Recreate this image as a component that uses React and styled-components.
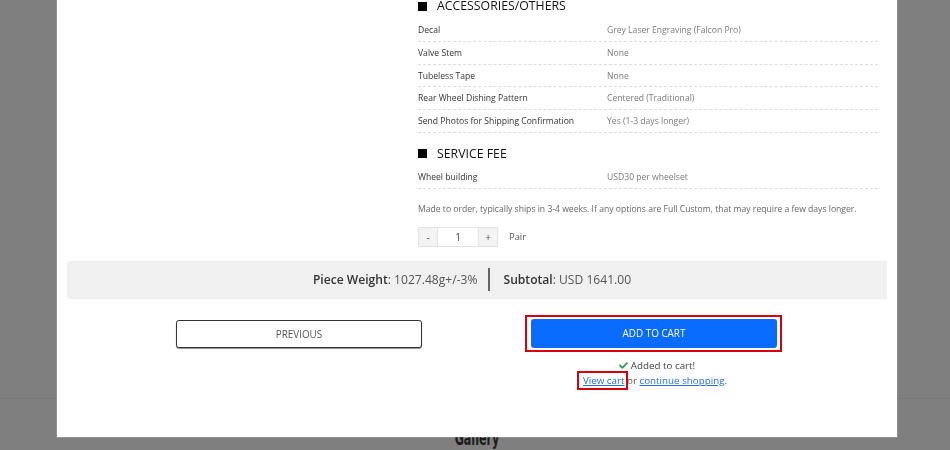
import React from "react";
import styled, { createGlobalStyle } from "styled-components";
import { FaCheck } from "react-icons/fa";

const Global = createGlobalStyle`
  html, body { margin: 0; padding: 0; }
  body {
    font-family: "Open Sans", "Noto Sans", sans-serif;
    background: #ffffff;
    overflow: hidden;
  }
`;

const Page = styled.div`
  height: 450px;
  display: flex;
  flex-direction: column;
  background: #fff;
`;

const PageSpacer = styled.div`
  height: 406px;
  border-bottom: 1px solid #f2f2f2;
`;

const GalleryTitle = styled.h2`
  margin: 27px 0 0;
  text-align: center;
  font-family: "DejaVu Sans", sans-serif;
  font-stretch: condensed;
  font-weight: 700;
  font-size: 20px;
  line-height: 24px;
  color: #383838;
  transform: translateX(2px) scaleX(0.62);
`;

const Overlay = styled.div`
  position: fixed;
  inset: 0;
  background: rgba(0, 0, 0, 0.5);
  display: flex;
  flex-direction: column;
  align-items: flex-start;
`;

const Modal = styled.div`
  margin: -14px 0 0 57px;
  width: 840px;
  background: #fff;
  box-shadow: 0 0 0 1px rgba(255, 255, 255, 0.15);
  padding-bottom: 49px;
`;

const Top = styled.div`
  display: grid;
  grid-template-columns: 361px 460px;
`;

const Details = styled.div`
  display: flex;
  flex-direction: column;
`;

const Heading = styled.h3`
  display: flex;
  align-items: center;
  gap: 10px;
  margin: ${(p) => (p.$first ? "12px 0 5px" : "13px 0 4px")};
  font-size: 12.3px;
  line-height: 16px;
  font-weight: 400;
  color: #111;
  text-transform: uppercase;
  &::before {
    content: "";
    width: 9px;
    height: 9px;
    background: #000;
  }
`;

const Row = styled.div`
  display: grid;
  grid-template-columns: 189px 1fr;
  padding: 5px 0 4.75px;
  line-height: 12px;
  font-size: 8.6px;
  border-bottom: 1px dashed #dcdcdc;
`;

const Label = styled.span`
  color: #333;
`;

const Value = styled.span`
  color: #7a7a7a;
`;

const Note = styled.p`
  margin: 13px 0 0;
  font-size: 8.6px;
  line-height: 14px;
  color: #666;
  white-space: nowrap;
`;

const QtyRow = styled.div`
  display: flex;
  align-items: center;
  margin-top: 11px;
  gap: 11px;
`;

const Qty = styled.div`
  display: flex;
  height: 20px;
  border: 1px solid #e2e2e2;
  box-sizing: border-box;
`;

const QtyBtn = styled.span`
  width: 18px;
  background: #f3f3f3;
  display: flex;
  align-items: center;
  justify-content: center;
  font-size: 10px;
  color: #555;
`;

const QtyInput = styled.span`
  width: 40px;
  display: flex;
  align-items: center;
  justify-content: center;
  font-size: 10px;
  color: #444;
  border-left: 1px solid #e2e2e2;
  border-right: 1px solid #e2e2e2;
`;

const Unit = styled.span`
  font-size: 9.4px;
  color: #555;
`;

const Summary = styled.div`
  margin: 14px 10px 0;
  padding-right: 10px;
  height: 38px;
  background: #f0f0f0;
  display: flex;
  align-items: center;
  justify-content: center;
  font-size: 12.1px;
  color: #555;
`;

const Stat = styled.span`
  b { color: #333; font-weight: 600; }
`;

const Sep = styled.span`
  width: 2px;
  height: 23px;
  background: #666;
  margin: 0 14px 0 10px;
`;

const Actions = styled.div`
  display: grid;
  grid-template-columns: 246px 257px;
  column-gap: 103px;
  justify-content: center;
  padding-left: 4px;
  margin-top: 16px;
`;

const Column = styled.div`
  display: flex;
  flex-direction: column;
  align-items: center;
`;

const Ring = styled.div`
  border: 2px solid #d9000d;
  padding: 2px 3px 2px 4px;
`;

const Button = styled.button`
  display: block;
  width: 246px;
  height: 29px;
  border-radius: 3px;
  font-family: inherit;
  font-size: 9.9px;
  cursor: pointer;
  ${(p) =>
    p.$primary
      ? `
    background: #0a6cff;
    color: #fff;
    border: none;
  `
      : `
    background: #fff;
    color: #555;
    border: 1px solid #333;
    box-shadow: 0 1px 1px rgba(0,0,0,.45);
    margin-top: 5px;
    height: 28px;
  `}
`;

const Messages = styled.div`
  margin-top: 6px;
  text-align: center;
  font-size: 9.8px;
  line-height: 15px;
  color: #555;
`;

const Added = styled.div`
  display: flex;
  align-items: center;
  justify-content: center;
  gap: 3px;
  padding-left: 7px;
  color: #444;
  svg { color: #2f9e3f; }
`;

const Link = styled.a`
  color: #1f6fe0;
  text-decoration: underline;
  ${(p) =>
    p.$marked &&
    `
    outline: 2px solid #d9000d;
    outline-offset: 1px;
    padding: 0 0 0 3px;
  `}
`;

const accessories = [
  ["Decal", "Grey Laser Engraving (Falcon Pro)"],
  ["Valve Stem", "None"],
  ["Tubeless Tape", "None"],
  ["Rear Wheel Dishing Pattern", "Centered (Traditional)"],
  ["Send Photos for Shipping Confirmation", "Yes (1-3 days longer)"],
];

export default function App() {
  return (
    <>
      <Global />
      <Page>
        <PageSpacer />
        <GalleryTitle>Gallery</GalleryTitle>
      </Page>
      <Overlay>
        <Modal>
          <Top>
            <div />
            <Details>
              <Heading $first>Accessories/Others</Heading>
              {accessories.map(([l, v]) => (
                <Row key={l}>
                  <Label>{l}</Label>
                  <Value>{v}</Value>
                </Row>
              ))}
              <Heading>Service Fee</Heading>
              <Row>
                <Label>Wheel building</Label>
                <Value>USD30 per wheelset</Value>
              </Row>
              <Note>
                Made to order, typically ships in 3-4 weeks. If any options are Full Custom, that may require a few days longer.
              </Note>
              <QtyRow>
                <Qty>
                  <QtyBtn>-</QtyBtn>
                  <QtyInput>1</QtyInput>
                  <QtyBtn>+</QtyBtn>
                </Qty>
                <Unit>Pair</Unit>
              </QtyRow>
            </Details>
          </Top>
          <Summary>
            <Stat>
              <b>Piece Weight</b>: 1027.48g+/-3%
            </Stat>
            <Sep />
            <Stat>
              <b>Subtotal</b>: USD 1641.00
            </Stat>
          </Summary>
          <Actions>
            <Column>
              <Button>PREVIOUS</Button>
            </Column>
            <Column>
              <Ring>
                <Button $primary>ADD TO CART</Button>
              </Ring>
              <Messages>
                <Added>
                  <FaCheck size={9} /> Added to cart!
                </Added>
                <div>
                  <Link href="#" $marked>View cart</Link> or{" "}
                  <Link href="#">continue shopping</Link>.
                </div>
              </Messages>
            </Column>
          </Actions>
        </Modal>
      </Overlay>
    </>
  );
}
